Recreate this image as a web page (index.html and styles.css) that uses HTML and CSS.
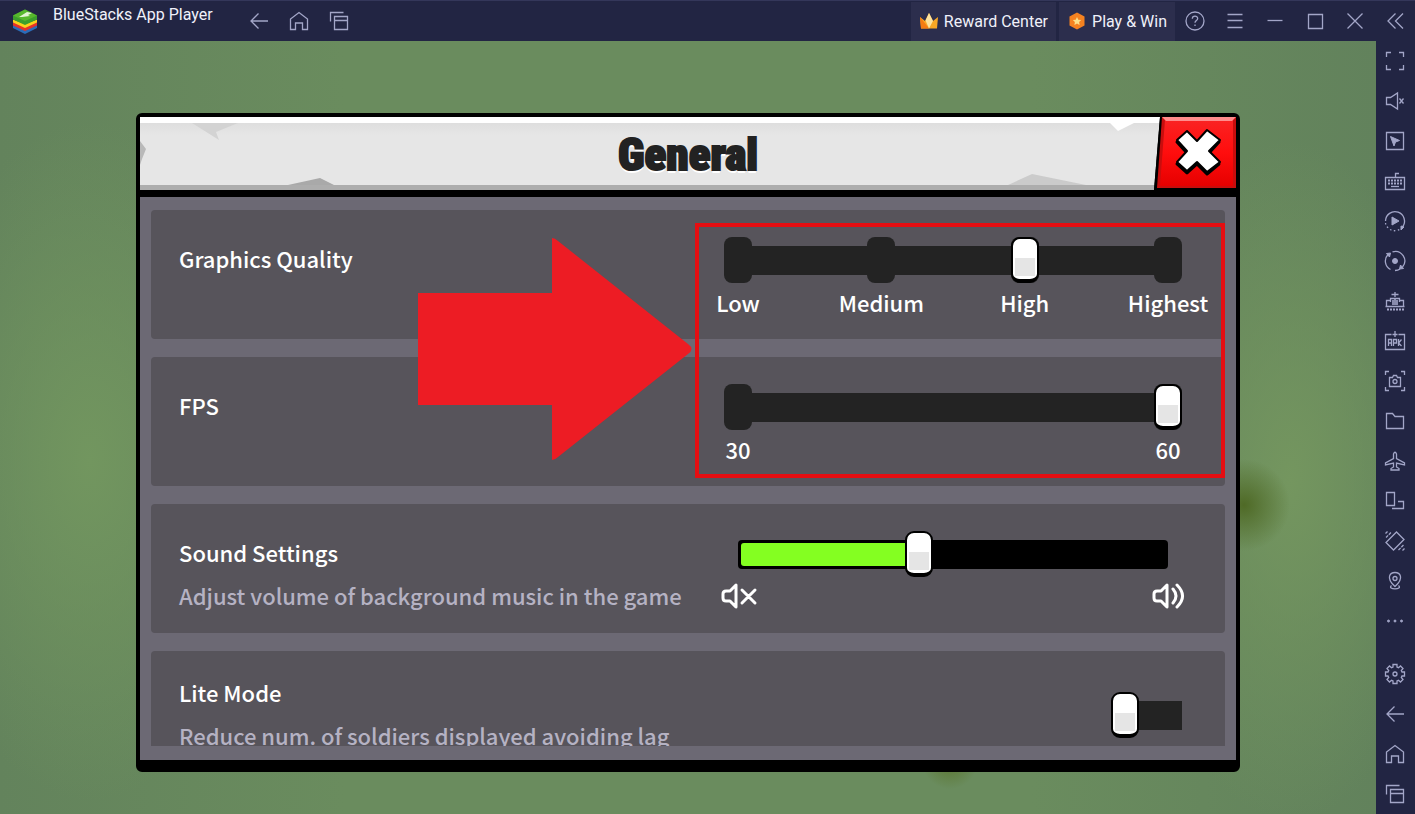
FILE: index.html
```html
<!DOCTYPE html>
<html lang="en">
<head>
<meta charset="utf-8">
<title>BlueStacks App Player</title>
<link rel="stylesheet" href="styles.css">
</head>
<body>
<header class="topbar">
  <svg class="logo" viewBox="0 0 26 26" aria-hidden="true">
    <path d="M1 17v3l12 6 12-6v-3l-12 5z" fill="#2b6cb8"/>
    <path d="M1 14v3.500l12 5.500 12-5.500V14l-12 5z" fill="#e5322b"/>
    <path d="M1 11.500v3l12 5.500 12-5.500v-3l-12 4.500z" fill="#fbd21c"/>
    <path d="M1 7.500 13 1.500l12 6v4L13 17 1 11.500z" fill="#3c9f2c"/>
    <path d="M1 7.500 13 1.500l12 6L13 13z" fill="#57b82c"/>
    <path d="m7 9 8-5 5 1-4 2 2 1-8 1z" fill="#e4f5d4"/>
  </svg>
  <span class="app-name">BlueStacks App Player</span>
  <nav class="nav" aria-label="Navigation">
    <button class="icon-btn" aria-label="Back"><svg viewBox="0 0 24 24"><path d="M21 12H4M11.500 4.500 4 12l7.500 7.500"/></svg></button>
    <button class="icon-btn" aria-label="Home"><svg viewBox="0 0 24 24"><path d="M3.500 20.500V10L12 3.500l8.500 6.500v10.500h-5V14h-7v6.500z"/></svg></button>
    <button class="icon-btn" aria-label="Recent apps"><svg viewBox="0 0 24 24"><path d="M7.500 7.500h13v13h-13zM7.500 11.500h13M3.500 12.500v-9h13"/></svg></button>
  </nav>
  <div class="promos">
    <button class="promo">
      <svg viewBox="0 0 20 20" aria-hidden="true"><path d="M1 6l5 4 4-8 4 8 5-4-1 11.500H2z" fill="#f9a825"/><path d="M1 6l9 11.500H2z" fill="#f57c14"/><path d="m10 2 4 8-4 7.500-3.500-8z" fill="#fde3a0"/></svg>
      Reward Center
    </button>
    <button class="promo">
      <svg viewBox="0 0 20 20" aria-hidden="true"><path d="m10 1.500 7.500 4v9L10 18.500l-7.500-4v-9z" fill="#f58220"/><path d="m10 6 1.300 2.700 2.900.4-2.100 2 .5 2.900-2.600-1.400L7.400 14l.5-2.900-2.100-2 2.900-.4z" fill="#fde08a"/></svg>
      Play &amp; Win
    </button>
  </div>
  <div class="window-controls">
    <button class="icon-btn" aria-label="Help"><svg viewBox="0 0 24 24"><circle cx="12" cy="12" r="9"/><path d="M9.300 9.800c0-3.700 5.400-3.500 5.400-.3 0 2-2.700 2.100-2.700 4.300M12 15.500v1.500"/></svg></button>
    <button class="icon-btn" aria-label="Menu"><svg viewBox="0 0 24 24"><path d="M4.500 5.500h15M4.500 11.500h15M4.500 18.500h15"/></svg></button>
    <button class="icon-btn" aria-label="Minimize"><svg viewBox="0 0 24 24"><path d="M4.500 11.500h15"/></svg></button>
    <button class="icon-btn" aria-label="Maximize"><svg viewBox="0 0 24 24"><path d="M5.500 5.500h14v14h-14z"/></svg></button>
    <button class="icon-btn" aria-label="Close"><svg viewBox="0 0 24 24"><path d="m4.500 4.500 15 15M19.500 4.500l-15 15"/></svg></button>
    <button class="icon-btn" aria-label="Collapse sidebar"><svg viewBox="0 0 24 24"><path d="M12.500 4.500 5 12l7.500 7.500M20 4.500 12.500 12l7.500 7.500"/></svg></button>
  </div>
</header>

<div class="workspace">
  <main class="stage">
    <section class="dialog" aria-labelledby="dialog-title">
      <header class="dialog-head">
        <div class="plate">
          <svg class="chip chip-top-left" viewBox="0 0 46 18" aria-hidden="true"><path d="M0 0h46L24 9l3 8z" fill="#d3d3d3"/></svg>
          <svg class="chip chip-side" viewBox="0 0 8 26" aria-hidden="true"><path d="M0 0l6 8-4 10-2 6z" fill="#b9b9b9"/></svg>
          <svg class="chip chip-bottom-left" viewBox="0 0 46 8" aria-hidden="true"><path d="M0 8 32 1l14 7z" fill="#a9a9a9"/></svg>
          <svg class="chip chip-bottom-right" viewBox="0 0 78 12" aria-hidden="true"><path d="M0 12 24 1l54 11z" fill="#cbcbcb"/></svg>
          <svg class="chip chip-top-right" viewBox="0 0 24 8" aria-hidden="true"><path d="M0 0h24L8 8z" fill="#fff"/></svg>
        </div>
        <h1 class="dialog-title" id="dialog-title">General</h1>
        <button class="dialog-close" aria-label="Close settings">
          <svg viewBox="0 0 82 73" aria-hidden="true">
            <defs><linearGradient id="red" x2="0" y2="1"><stop offset="0" stop-color="#fa2222"/><stop offset=".5" stop-color="#ff0d0d"/><stop offset="1" stop-color="#e60000"/></linearGradient></defs>
            <path d="M6 0h76v73H0z"/>
            <path d="M8 0h74v71H3z" fill="#c90d0d"/>
            <path d="M11 3h68v66H6z" fill="url(#red)"/>
            <path d="M8 0h74l-4 4H12z" fill="#ff8c8c"/>
            <g stroke="#000" stroke-width="3" stroke-linejoin="round">
              <path d="m33 17 10 9 10-10 12 9-10 11 10 11-12 10-10-10-10 9-10-9 10-11-10-11z"/>
              <path d="m33 14 10 10 10-11 13 10-11 11 11 11-13 10-10-10-10 9-10-9 10-11-10-11z" fill="#fff" stroke-width="2"/>
            </g>
          </svg>
        </button>
      </header>

      <div class="dialog-body">
        <div class="settings">
          <div class="card">
            <label class="name" for="quality">Graphics Quality</label>
            <div class="control">
              <div class="slider">
                <span class="track"></span>
                <span class="stops"><i></i><i></i><i></i><i></i></span>
                <input id="quality" type="range" min="0" max="3" value="2">
              </div>
              <div class="ticks"><span>Low</span><span>Medium</span><span>High</span><span>Highest</span></div>
            </div>
          </div>
          <div class="card">
            <label class="name" for="fps">FPS</label>
            <div class="control">
              <div class="slider">
                <span class="track"></span>
                <span class="stops"><i></i><i></i></span>
                <input id="fps" type="range" min="30" max="60" step="30" value="60">
              </div>
              <div class="ticks"><span>30</span><span>60</span></div>
            </div>
          </div>
          <div class="card">
            <div class="text">
              <label class="name" for="sound">Sound Settings</label>
              <p class="hint">Adjust volume of background music in the game</p>
            </div>
            <div class="control">
              <div class="slider">
                <span class="track track-volume"><span class="fill" style="width:42%"></span></span>
                <input id="sound" type="range" min="0" max="100" value="42">
              </div>
              <div class="ticks">
                <span><svg class="speaker" viewBox="0 0 40 28" aria-hidden="true"><path d="M18 3v22l-6-6H8q-3 0-3-3v-4q0-3 3-3h4zM24 8l13 13M37 8 24 21"/></svg></span>
                <span><svg class="speaker" viewBox="0 0 40 28" aria-hidden="true"><path d="M19 3v22l-6-6H9q-3 0-3-3v-4q0-3 3-3h4zM25 7q6 7 0 14M29 3q11 11 0 22"/></svg></span>
              </div>
            </div>
          </div>
          <div class="card card-toggle">
            <div class="text">
              <label class="name" for="lite">Lite Mode</label>
              <p class="hint">Reduce num. of soldiers displayed avoiding lag</p>
            </div>
            <input class="toggle" id="lite" type="checkbox">
          </div>
        </div>
        <div class="highlight"></div>
        <svg class="arrow" viewBox="0 0 274 222" aria-hidden="true"><path d="M0 55h134V0q3 0 6 3l130 103q7 5 0 10L140 219q-3 3-6 3v-55H0z" fill="#ed1c24"/></svg>
      </div>
    </section>
  </main>

  <aside class="sidebar" aria-label="Tools">
    <button class="icon-btn" aria-label="Full screen"><svg viewBox="0 0 24 24"><path d="M3.500 8V3.500H8M16 3.500h4.500V8M20.500 16v4.500H16M8 20.500H3.500V16"/></svg></button>
    <button class="icon-btn" aria-label="Mute"><svg viewBox="0 0 24 24"><path d="M3.500 8.500h4l7-4.500v16l-7-4.500h-4zM16.500 9.500l4 5M20.500 9.500l-4 5"/></svg></button>
    <button class="icon-btn" aria-label="Lock cursor"><svg viewBox="0 0 24 24"><path d="M3.500 3.500h17v17h-17z"/><path class="solid" d="m7.500 7.500 9 4-4 1.500-1.500 4z"/></svg></button>
    <button class="icon-btn" aria-label="Game controls"><svg viewBox="0 0 24 24"><path d="M2.500 8.500h19v12h-19zM12.500 8.500V4.500H16"/><path d="M5 11.500h14M5 14.500h14" stroke-width="2" stroke-dasharray="2 1"/><path d="M8 17.500h8"/></svg></button>
    <button class="icon-btn" aria-label="Macro recorder"><svg viewBox="0 0 24 24"><path d="M2.500 12a9.500 9.500 0 1 1 17 6"/><path d="M2.500 14a9.500 9.500 0 0 0 16 5" stroke-dasharray="1.500 2.500"/><path class="solid" d="M9 8v8l7-4zM18 17l3 1-3 3z"/></svg></button>
    <button class="icon-btn" aria-label="Sync"><svg viewBox="0 0 24 24"><path d="M7.500 20.500A9.500 9.500 0 0 1 5 5.500M9.500 2.800A9.500 9.500 0 0 1 19.500 18M12 21.500q3 0 5-1.500"/><path class="solid" d="M3.500 4.500 7.500 4l-1 4zM20.500 19.500l-4 .5 1-4z"/><circle class="solid" cx="12" cy="12" r="2.500"/></svg></button>
    <button class="icon-btn" aria-label="Memory trim"><svg viewBox="0 0 24 24"><path d="M12 3v5M8.500 5.500h7M7.500 13V9.500h9V13M3.500 17.500v-6h4M16.500 11.500h4v6M2.500 17.500h19"/><path d="M10 11v5M12 9v7M14 11v5" stroke-width="1.600"/><path d="M4 20.500h17" stroke-width="2" stroke-dasharray="2 1"/></svg></button>
    <button class="icon-btn" aria-label="Install APK"><svg viewBox="0 0 24 24"><path d="M8.500 5.500h-6v15h19v-15h-6M12 2v6M9.500 5.500h5M5.500 17v-6.500h3V17M5.500 14h3M10.500 17v-6.500h3v3.500h-3M15.500 10v7M18.500 10.500l-3 3.500 3 3"/></svg></button>
    <button class="icon-btn" aria-label="Screenshot"><svg viewBox="0 0 24 24"><path d="M2.500 6V2.500H6M18 2.500h3.500V6M21.500 18v3.500H18M6 21.500H2.500V18M6.500 8.500h3l1-2h3l1 2h3v9h-11z"/><circle cx="12" cy="12.500" r="2"/></svg></button>
    <button class="icon-btn" aria-label="Media folder"><svg viewBox="0 0 24 24"><path d="M3.500 4.500h6l2.500 3h8.500v12h-17z"/></svg></button>
    <button class="icon-btn" aria-label="Airplane"><svg viewBox="0 0 24 24"><path d="M10.500 5q1.500-3.500 3 0v4.500l8 4.500v2l-8-2v4l2.500 1.500v1.500H8v-1.500l2.500-1.500v-4l-8 2v-2l8-4.500z"/></svg></button>
    <button class="icon-btn" aria-label="Rotate"><svg viewBox="0 0 24 24"><path d="M3.500 3.500h8v13h-8zM15 12.500h5.500v7H9"/></svg></button>
    <button class="icon-btn" aria-label="Shake"><svg viewBox="0 0 24 24"><path d="M13.500 3 21 10.500 10.500 21 3 13.500z"/><path d="M3 8.500 8.500 3M15.500 21l5.500-5.500" stroke-dasharray="3 1"/><path d="M2.500 4.500l2-2M19.500 21.500l2-2"/></svg></button>
    <button class="icon-btn" aria-label="Location"><svg viewBox="0 0 24 24"><path d="M12 17.500C2 8.500 7.500 3.500 12 3.500s10 5 0 14z"/><circle cx="12" cy="9.500" r="2"/><path d="M8.500 16.500c-5 4.500 12 4.500 7 0"/></svg></button>
    <button class="icon-btn" aria-label="More"><svg viewBox="0 0 24 24"><g class="solid"><circle cx="5.500" cy="12" r="1"/><circle cx="12" cy="12" r="1"/><circle cx="18.500" cy="12" r="1"/></g></svg></button>
    <button class="icon-btn push" aria-label="Settings"><svg viewBox="0 0 24 24"><path d="M10 5V2.500h4V5l1.500.7L17.500 4 20 6.500l-1.700 2L19 10h2.500v4H19l-.7 1.500 1.700 2-2.500 2.500-2-1.700L14 19v2.500h-4V19l-1.500-.7-2 1.700L4 17.500l1.700-2L5 14H2.500v-4H5l.7-1.500-1.700-2L6.500 4l2 1.700z"/><circle cx="12" cy="12" r="2"/></svg></button>
    <button class="icon-btn" aria-label="Back"><svg viewBox="0 0 24 24"><path d="M21 12H4M11.500 4.500 4 12l7.500 7.500"/></svg></button>
    <button class="icon-btn" aria-label="Home"><svg viewBox="0 0 24 24"><path d="M3.500 20.500V10L12 3.500l8.500 6.500v10.500h-5V14h-7v6.500z"/></svg></button>
    <button class="icon-btn" aria-label="Recent apps"><svg viewBox="0 0 24 24"><path d="M7.500 7.500h13v13h-13zM7.500 11.500h13M3.500 12.500v-9h13"/></svg></button>
  </aside>
</div>
</body>
</html>
```
FILE: styles.css
```css
*,
*::before { box-sizing: border-box; }

body {
  margin: 0;
  min-height: 100vh;
  display: flex;
  flex-direction: column;
  background: #222543;
  font-family: Roboto, "Liberation Sans", sans-serif;
}

button {
  border: 0;
  padding: 0;
  background: none;
  font: inherit;
  color: inherit;
}

/* Title bar */
.topbar {
  display: flex;
  align-items: center;
  height: 41px;
  padding-left: 12px;
  border-top: 1px solid #34375a;
  color: #f0f1fa;
  font-size: 16px;
}
.logo { width: 26px; height: 26px; }
.app-name {
  align-self: flex-start;
  margin-left: 15px;
  line-height: 28px;
}
.nav { display: flex; margin-left: 26px; }

.icon-btn {
  display: grid;
  place-items: center;
  width: 40px;
  height: 40px;
  color: #a3a6c8;
}
.icon-btn svg {
  width: 24px;
  height: 24px;
  fill: none;
  stroke: currentColor;
  stroke-width: 1.3;
}
.icon-btn .solid { fill: currentColor; stroke-width: 1; }

.promos {
  display: flex;
  gap: 3px;
  margin-left: auto;
}
.promo {
  display: flex;
  align-items: center;
  gap: 5px;
  height: 39px;
  padding: 0 8px;
  background: #2c2e4d;
}
.promo svg { width: 20px; height: 20px; }
.window-controls { display: flex; }

/* Work area */
.workspace {
  flex: 1;
  display: flex;
}
.sidebar {
  display: flex;
  flex-direction: column;
  width: 39px;
}
.sidebar .icon-btn {
  width: 39px;
  padding-right: 1px;
}
.sidebar .push { margin-top: auto; }

.stage {
  flex: 1;
  display: flex;
  padding: 72px 136px 42px;
  background:
    radial-gradient(circle at 1244px 464px, #4f6a26, #4f6a2699 18px, #4f6a2600 46px),
    radial-gradient(circle at 950px 720px, #5a752f, #5a752f00 28px),
    radial-gradient(ellipse 160px 340px at 1290px 440px, #74965f, #74965f00),
    radial-gradient(ellipse 180px 340px at 90px 420px, #72965f, #72965f00),
    linear-gradient(90deg, #63835c, #6a8c5e 25%, #6a8c5e 75%, #62825c);
}

/* Dialog */
.dialog {
  flex: 1;
  min-width: 0;
  display: flex;
  flex-direction: column;
  border: 4px solid #000;
  border-bottom-width: 12px;
  border-radius: 6px;
  background: #000;
}
.dialog-head {
  display: grid;
  grid-template-columns: 1fr 82px;
  grid-template-rows: 73px;
  margin-bottom: 7px;
}
.plate {
  grid-area: 1 / 1 / 2 / 3;
  position: relative;
  margin-right: 76px;
  border-top: 6px solid #fff;
  border-bottom: 5px solid #adadad;
  background: linear-gradient(#dedede, #e6e6e6 12px, #e6e6e6);
  clip-path: polygon(0 0, 100% 0, calc(100% - 6px) 100%, 0 100%);
}
.chip { position: absolute; }
.chip-top-left { left: 52px; top: 0; width: 46px; }
.chip-side { left: 0; top: 18px; width: 8px; }
.chip-bottom-left { left: 148px; bottom: 0; width: 46px; }
.chip-bottom-right { right: 74px; bottom: 0; width: 78px; }
.chip-top-right { right: 26px; top: 0; width: 24px; }

.dialog-title {
  grid-area: 1 / 1 / 2 / 3;
  z-index: 1;
  place-self: center;
  margin: 0;
  padding-top: 3px;
  color: #222;
  font: 900 45px/70px "Roboto Condensed", Roboto, "Liberation Sans", sans-serif;
  -webkit-text-stroke: 2px #222;
  text-shadow: 0 3px 0 #fff;
}
.dialog-close {
  grid-area: 1 / 2;
  z-index: 1;
}
.dialog-close svg { display: block; width: 82px; height: 73px; }

.dialog-body {
  position: relative;
  flex: 1;
  padding: 13px 11px 14px;
  background: #6c6974;
  color: #fff;
  font: 500 22px/43px "Noto Sans CJK SC", "Noto Sans", sans-serif;
}
.settings {
  display: flex;
  flex-direction: column;
  gap: 18px;
  height: 536px;
  overflow: hidden;
}
.card {
  flex: none;
  display: flex;
  justify-content: space-between;
  align-items: flex-start;
  height: 129px;
  padding: 27px 43px 0 28px;
  border-radius: 4px;
  background: #57545b;
}
.hint { margin: 0; color: #b5b2c3; }
.text { display: flex; flex-direction: column; }
.card-toggle { padding-top: 20px; }

.control { width: 458px; }
.slider {
  display: grid;
  align-items: center;
  height: 46px;
}
.slider > * { grid-area: 1 / 1; }
.track {
  height: 29px;
  margin: 0 14px;
  background: #232323;
}
.track-volume {
  padding: 3px;
  border-radius: 4px;
  background: #000;
}
.fill {
  display: block;
  height: 100%;
  border-radius: 3px 0 0 3px;
  background: #84ff21;
}
.stops {
  display: flex;
  justify-content: space-between;
}
.stops i {
  width: 28px;
  height: 46px;
  border-radius: 8px;
  background: #232323;
}
.ticks {
  display: flex;
  justify-content: space-between;
  line-height: 38px;
}
.ticks span {
  display: flex;
  justify-content: center;
  align-items: center;
  width: 28px;
  height: 38px;
}
.speaker {
  flex: none;
  width: 40px;
  height: 28px;
  fill: none;
  stroke: #fff;
  stroke-width: 3;
  stroke-linecap: round;
  stroke-linejoin: round;
}

input[type="range"] {
  appearance: none;
  width: 100%;
  height: 46px;
  margin: 0;
  background: none;
}
input[type="range"]::-webkit-slider-thumb {
  appearance: none;
  box-sizing: border-box;
  width: 28px;
  height: 46px;
  border: 2px solid #000;
  border-bottom-width: 4px;
  border-radius: 9px;
  background: linear-gradient(#e5e5e5, #e5e5e5) 50% 19px / 20px 18px no-repeat #fff;
}

.toggle {
  appearance: none;
  width: 71px;
  height: 46px;
  margin: 21px 0 0;
  border-radius: 4px;
  background: linear-gradient(#232323, #232323) 100% 50% / 57px 29px no-repeat;
}
.toggle::before {
  content: "";
  display: block;
  width: 28px;
  height: 46px;
  border: 2px solid #000;
  border-bottom-width: 4px;
  border-radius: 9px;
  background: linear-gradient(#e5e5e5, #e5e5e5) 50% 19px / 20px 18px no-repeat #fff;
}
.toggle:checked::before { margin-left: auto; }

/* Annotations drawn over the settings */
.highlight {
  position: absolute;
  top: 26px;
  right: 11px;
  width: 530px;
  height: 255px;
  border: 4px solid #e50e12;
  pointer-events: none;
}
.arrow {
  position: absolute;
  top: 41px;
  right: 544px;
  width: 274px;
  height: 222px;
  pointer-events: none;
}
```
